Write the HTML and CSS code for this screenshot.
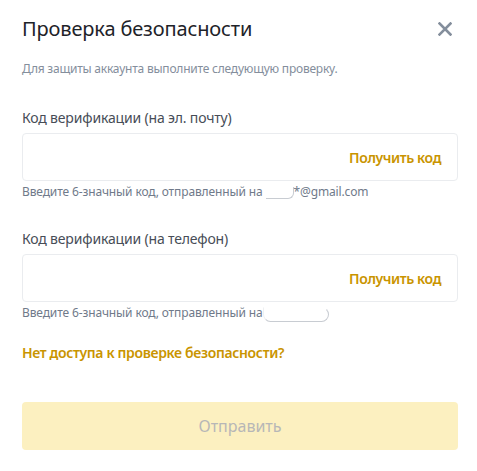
FILE: index.html
```html
<!DOCTYPE html>
<html lang="ru">
<head>
<meta charset="utf-8">
<link rel="stylesheet" href="styles.css">
</head>
<body>
<div class="modal">
  <div class="header">
    <h1 class="title">Проверка безопасности</h1>
    <button class="close" aria-label="Закрыть">
      <svg width="14" height="14" viewBox="0 0 14 14"><path d="M1.5 1.5 L12.5 12.5 M12.5 1.5 L1.5 12.5" stroke="#848E9C" stroke-width="2.6" stroke-linecap="square" fill="none"/></svg>
    </button>
  </div>
  <p class="subtitle">Для защиты аккаунта выполните следующую проверку.</p>

  <div class="field first">
    <label class="label">Код верификации (на эл. почту)</label>
    <div class="input">
      <span class="action">Получить код</span>
    </div>
    <p class="hint">Введите 6-значный код, отправленный на <span class="mask-email"></span>*@gmail.com</p>
  </div>

  <div class="field second">
    <label class="label">Код верификации (на телефон)</label>
    <div class="input">
      <span class="action">Получить код</span>
    </div>
    <p class="hint">Введите 6-значный код, отправленный на<span class="mask-phone"></span></p>
  </div>

  <a class="link">Нет доступа к проверке безопасности?</a>

  <button class="submit">Отправить</button>
</div>
</body>
</html>
```

FILE: styles.css
```css
* { box-sizing: border-box; }
body {
  margin: 0;
  background: #fff;
  font-family: "Noto Sans", "Open Sans", sans-serif;
  color: #1e2329;
}
.modal {
  padding: 15px 19px 0 22px;
  display: flex;
  flex-direction: column;
}
.header {
  display: flex;
  align-items: center;
  justify-content: space-between;
  height: 28px;
}
.title {
  margin: 0;
  font-size: 20px;
  font-weight: 400;
  line-height: 28px;
  letter-spacing: -0.14px;
  color: #1e2329;
}
.close {
  border: 0;
  background: none;
  padding: 0;
  margin-right: 6px;
  width: 14px;
  height: 14px;
  display: flex;
}
.subtitle {
  margin: 17px 0 0;
  font-size: 12px;
  line-height: 18px;
  letter-spacing: -0.22px;
  color: #848e9c;
}
.field { display: flex; flex-direction: column; }
.field.first { margin-top: 30px; }
.field.second { margin-top: 28px; }
.label {
  font-size: 14px;
  line-height: 20px;
  letter-spacing: -0.17px;
  color: #474d57;
  margin-bottom: 5px;
}
.input {
  height: 48px;
  border: 1px solid #eaecef;
  border-radius: 4px;
  display: flex;
  align-items: center;
  justify-content: flex-end;
  padding-right: 16px;
}
.action {
  font-size: 14px;
  font-weight: 600;
  letter-spacing: -0.4px;
  color: #c99400;
}
.hint {
  margin: 2px 0 0;
  font-size: 12px;
  line-height: 18px;
  letter-spacing: -0.13px;
  color: #707a8a;
}
.mask-email {
  display: inline-block;
  width: 28px;
  height: 12px;
  vertical-align: -3px;
  border-bottom: 1px solid #c8ccd2;
  border-right: 1px solid #c8ccd2;
  border-radius: 0 0 6px 0;
}
.mask-phone {
  display: inline-block;
  width: 66px;
  height: 15px;
  vertical-align: -5px;
  border: 1px solid #c8ccd2;
  border-top-color: transparent;
  border-left-color: #eef0f2;
  border-radius: 0 9px 9px 9px;
}
.link {
  margin-top: 21px;
  font-size: 14px;
  line-height: 20px;
  font-weight: 600;
  letter-spacing: -0.35px;
  color: #c99400;
  cursor: pointer;
}
.submit {
  margin-top: 39px;
  height: 48px;
  border: 0;
  border-radius: 4px;
  background: #fcf0c0;
  color: #b7b7b7;
  font-family: inherit;
  font-size: 16px;
}
```
